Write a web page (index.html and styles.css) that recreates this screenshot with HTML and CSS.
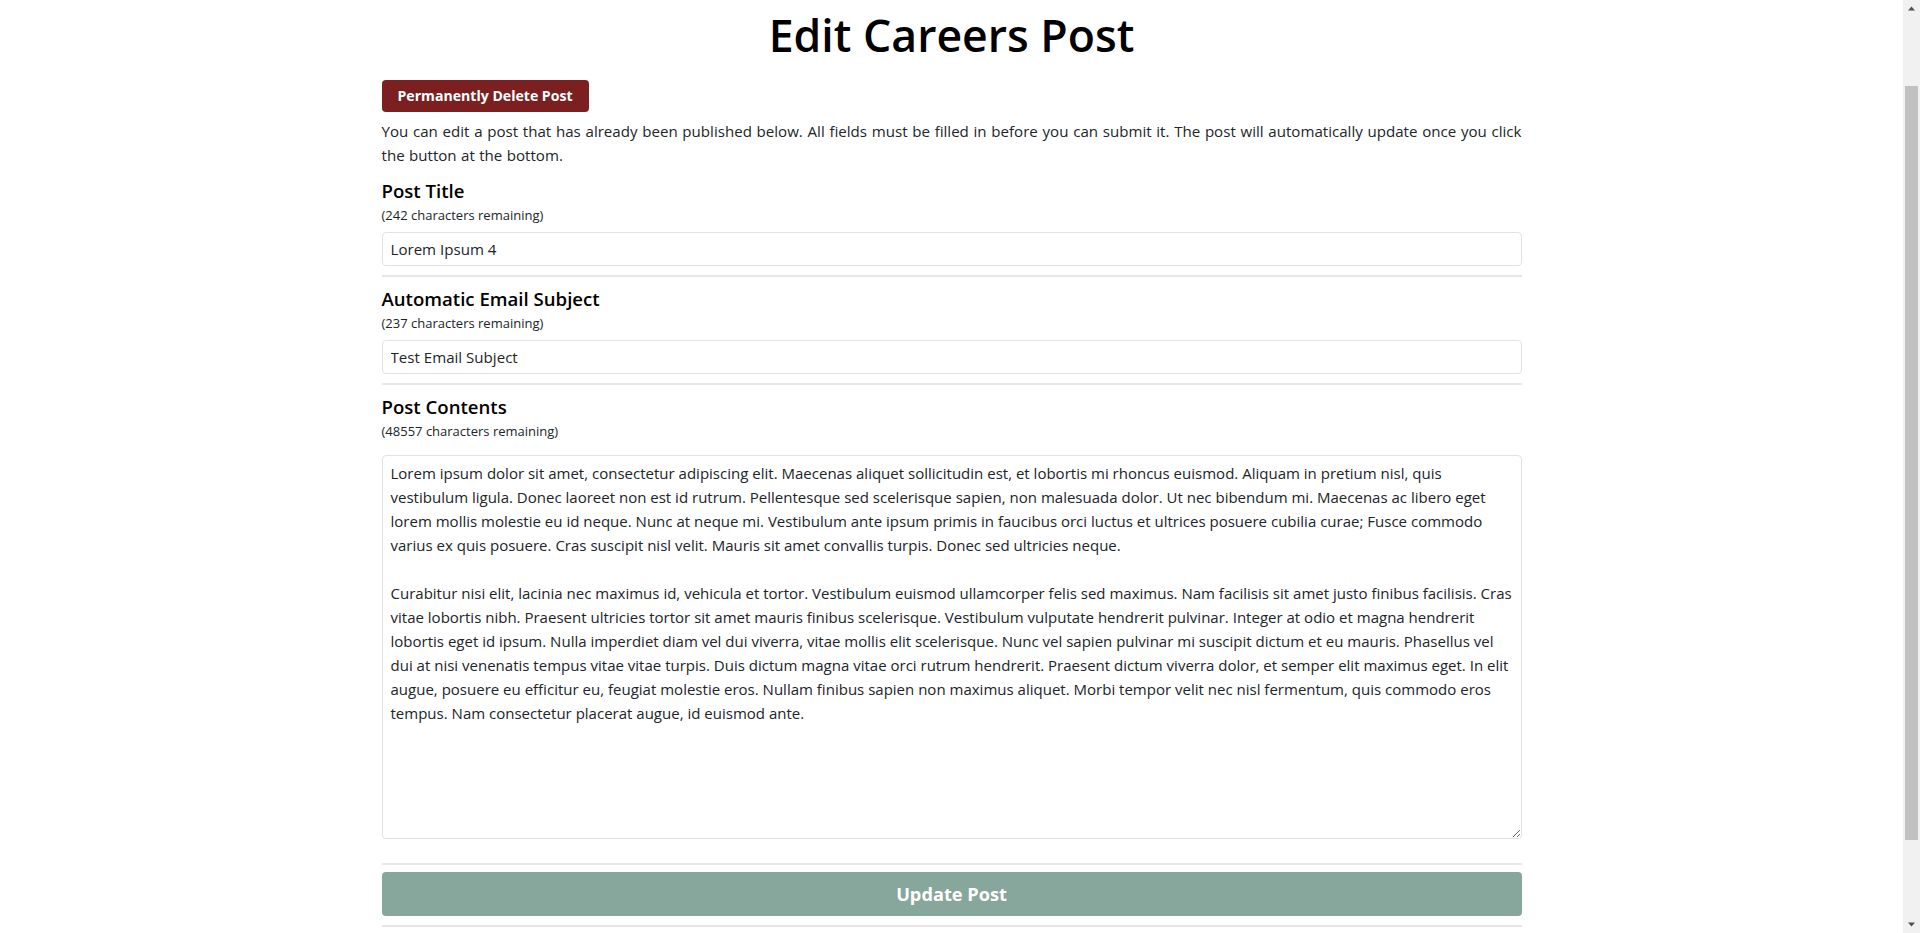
FILE: index.html
```html
<!DOCTYPE html>
<html lang="en">
<head>
<meta charset="utf-8">
<title>Edit Careers Post</title>
<link rel="stylesheet" href="styles.css">
</head>
<body>
<div class="page">
  <main class="container">
    <h1 class="page-title">Edit Careers Post</h1>
    <button type="button" class="btn-delete">Permanently Delete Post</button>
    <p class="intro">You can edit a post that has already been published below. All fields must be filled in before you can submit it. The post will automatically update once you click the button at the bottom.</p>
    <form class="edit-form">
      <div class="field">
        <label class="field-label" for="title">Post Title</label>
        <small class="field-hint">(242 characters remaining)</small>
        <input class="field-input" id="title" type="text" value="Lorem Ipsum 4">
      </div>
      <hr class="divider">
      <div class="field">
        <label class="field-label" for="subject">Automatic Email Subject</label>
        <small class="field-hint">(237 characters remaining)</small>
        <input class="field-input" id="subject" type="text" value="Test Email Subject">
      </div>
      <hr class="divider">
      <div class="field">
        <label class="field-label" for="contents">Post Contents</label>
        <small class="field-hint">(48557 characters remaining)</small>
        <textarea class="field-input field-textarea" id="contents">Lorem ipsum dolor sit amet, consectetur adipiscing elit. Maecenas aliquet sollicitudin est, et lobortis mi rhoncus euismod. Aliquam in pretium nisl, quis
vestibulum ligula. Donec laoreet non est id rutrum. Pellentesque sed scelerisque sapien, non malesuada dolor. Ut nec bibendum mi. Maecenas ac libero eget
lorem mollis molestie eu id neque. Nunc at neque mi. Vestibulum ante ipsum primis in faucibus orci luctus et ultrices posuere cubilia curae; Fusce commodo
varius ex quis posuere. Cras suscipit nisl velit. Mauris sit amet convallis turpis. Donec sed ultricies neque.

Curabitur nisi elit, lacinia nec maximus id, vehicula et tortor. Vestibulum euismod ullamcorper felis sed maximus. Nam facilisis sit amet justo finibus facilisis. Cras
vitae lobortis nibh. Praesent ultricies tortor sit amet mauris finibus scelerisque. Vestibulum vulputate hendrerit pulvinar. Integer at odio et magna hendrerit
lobortis eget id ipsum. Nulla imperdiet diam vel dui viverra, vitae mollis elit scelerisque. Nunc vel sapien pulvinar mi suscipit dictum et eu mauris. Phasellus vel
dui at nisi venenatis tempus vitae vitae turpis. Duis dictum magna vitae orci rutrum hendrerit. Praesent dictum viverra dolor, et semper elit maximus eget. In elit
augue, posuere eu efficitur eu, feugiat molestie eros. Nullam finibus sapien non maximus aliquet. Morbi tempor velit nec nisl fermentum, quis commodo eros
tempus. Nam consectetur placerat augue, id euismod ante.</textarea>
      </div>
      <hr class="divider divider-after-text">
      <button type="submit" class="btn-update">Update Post</button>
      <hr class="divider divider-end">
    </form>
  </main>
</div>
<div class="scrollbar" aria-hidden="true">
  <div class="sb-arrow"><svg width="9" height="9" viewBox="0 0 9 9"><polygon points="4.5,2.5 8,6.5 1,6.5" fill="#505050"/></svg></div>
  <div class="sb-gap"></div>
  <div class="sb-thumb"></div>
  <div class="sb-rest"></div>
  <div class="sb-arrow"><svg width="9" height="9" viewBox="0 0 9 9"><polygon points="1,2.5 8,2.5 4.5,6.5" fill="#505050"/></svg></div>
</div>
</body>
</html>
```
FILE: styles.css
```css
html,
body {
  height: 100%;
}

body {
  margin: 0;
  display: flex;
  overflow: hidden;
  font-family: "Open Sans", "Noto Sans", sans-serif;
  font-size: 15.1px;
  color: #212529;
  background: #fff;
}

.page {
  flex: 1;
  min-width: 0;
  overflow: hidden;
}

.container {
  max-width: 1140px;
  margin: 0 auto;
  padding-top: 8px;
}

.page-title {
  margin: 0 0 19px;
  font-size: 44.6px;
  font-weight: 600;
  line-height: 53px;
  text-align: center;
  color: #000;
}

.btn-delete {
  display: block;
  height: 32px;
  padding: 0 16px;
  border: 0;
  border-radius: 4px;
  background: #7b1f20;
  color: #fff;
  font-family: "Open Sans", sans-serif;
  font-size: 14.1px;
  font-weight: 700;
  line-height: 32px;
  cursor: pointer;
}

.intro {
  margin: 7px 0 13px;
  line-height: 24px;
  text-align: justify;
  word-spacing: 0.5px;
}

.edit-form {
  margin: 0;
}

.field {
  display: flex;
  flex-direction: column;
}

.field-label {
  font-size: 18.6px;
  font-weight: 600;
  line-height: 22px;
  color: #000;
}

.field-hint {
  margin-top: 4px;
  font-size: 13px;
  line-height: 18px;
}

.field-input {
  box-sizing: border-box;
  width: 100%;
  height: 34px;
  margin: 8px 0 0;
  padding: 0 8px;
  border: 1px solid #e2e2e2;
  border-radius: 4px;
  background: #fff;
  font-family: "Open Sans", sans-serif;
  font-size: 15.1px;
  color: #212529;
  outline: none;
}

.field-textarea {
  height: 384px;
  margin-top: 15px;
  padding: 5px 8px;
  font-size: 15.03px;
  line-height: 24px;
  white-space: pre;
  overflow: hidden;
  resize: vertical;
}

.divider {
  height: 2px;
  margin: 9px 0 11px;
  border: 0;
  background: #e6e6e6;
}

.divider-after-text {
  margin: 24px 0 7px;
}

.divider-end {
  margin: 9px 0 0;
}

.btn-update {
  display: block;
  width: 100%;
  height: 44px;
  padding: 0;
  border: 0;
  border-radius: 4px;
  background: #87a69c;
  color: #fff;
  font-family: "Open Sans", sans-serif;
  font-size: 18.2px;
  font-weight: 700;
  line-height: 44px;
  cursor: pointer;
}

/* static window scrollbar, as in the screenshot */
.scrollbar {
  flex: none;
  width: 17px;
  display: flex;
  flex-direction: column;
  background: #f1f1f1;
}

.sb-arrow {
  height: 17px;
  display: flex;
  align-items: center;
  justify-content: center;
}

.sb-gap {
  height: 69px;
}

.sb-thumb {
  height: 754px;
  margin: 0 2px;
  background: #c1c1c1;
}

.sb-rest {
  flex: 1;
}
```
